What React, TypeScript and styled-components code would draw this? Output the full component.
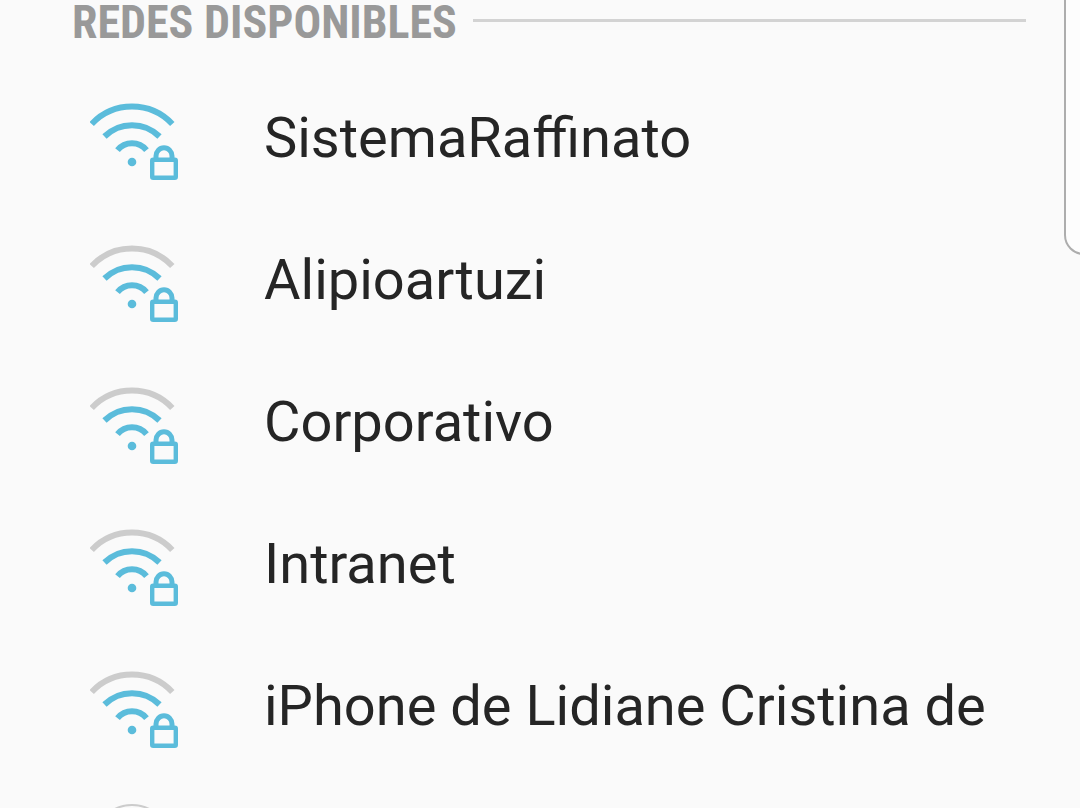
import React from 'react';
import styled, { createGlobalStyle } from 'styled-components';

const GlobalStyle = createGlobalStyle`
  html, body { margin: 0; height: 100%; overflow: hidden; background: #fafafa; }
  body { font-family: Roboto, "Liberation Sans", sans-serif; }
`;

const Page = styled.main`
  position: relative;
  height: 100vh;
  overflow: hidden;
`;

const SectionHeader = styled.header`
  display: flex;
  align-items: center;
  gap: 16px;
  height: 40px;
  padding: 0 54px 0 72px;
`;

const SectionTitle = styled.h1`
  margin: 4px 0 0;
  color: #999999;
  font-family: "Roboto Condensed", Roboto, "Liberation Sans", sans-serif;
  font-size: 46px;
  font-weight: 700;
  line-height: 40px;
  white-space: nowrap;
`;

const Divider = styled.span`
  flex: 1;
  height: 3px;
  background: #d3d3d3;
`;

const NetworkList = styled.ul`
  margin: 0;
  padding: 27px 0 0;
  list-style: none;
`;

const NetworkButton = styled.button`
  display: flex;
  align-items: center;
  gap: 84px;
  width: 100%;
  height: 142px;
  padding: 0 54px 0 90px;
  border: 0;
  background: transparent;
  color: #252525;
  font: inherit;
  font-size: 56px;
  line-height: 64px;
  text-align: left;
  white-space: nowrap;
`;

const TrailingRow = styled.li`
  display: flex;
  padding: 24px 54px 0 90px;
`;

const RowIcon = styled.svg`
  flex: none;
  width: 90px;
  height: 84px;
`;

const EdgePanel = styled.aside`
  position: absolute;
  top: -24px;
  right: -24px;
  box-sizing: border-box;
  width: 40px;
  height: 279px;
  border: 2px solid #adadad;
  border-radius: 20px;
  background: #fdfdfd;
`;

const blue = '#5bbcdb';
const grey = '#cccccc';

function Signal({ full }: { full: boolean }) {
  return (
    <RowIcon viewBox="0 0 90 84" fill="none" stroke={blue} strokeWidth="6" aria-hidden="true">
      <path d="M1.7 28A55.2 55.2 0 0 1 82.3 28" stroke={full ? blue : grey} />
      <path d="M14.5 40.5A39 39 0 0 1 69.5 40.5" />
      <path d="M27.5 54.2A18.7 18.7 0 0 1 56.5 54.2" />
      <circle cx="42" cy="66" r="4.3" fill={blue} stroke="none" />
      <rect x="62.2" y="63.7" width="23.6" height="18" rx="1" strokeWidth="4.4" />
      <path d="M66 63V60A8 8.2 0 0 1 82 60V63" strokeWidth="5" />
    </RowIcon>
  );
}

function RingIcon() {
  return (
    <RowIcon viewBox="0 0 90 84" fill="none" stroke={grey} strokeWidth="2" aria-hidden="true">
      <circle cx="42" cy="42" r="38" />
    </RowIcon>
  );
}

const networks = [
  { name: 'SistemaRaffinato', full: true },
  { name: 'Alipioartuzi', full: false },
  { name: 'Corporativo', full: false },
  { name: 'Intranet', full: false },
  { name: 'iPhone de Lidiane Cristina de', full: false },
];

export default function App() {
  return (
    <Page>
      <GlobalStyle />
      <SectionHeader>
        <SectionTitle>REDES DISPONIBLES</SectionTitle>
        <Divider />
      </SectionHeader>
      <NetworkList>
        {networks.map((network) => (
          <li key={network.name}>
            <NetworkButton type="button">
              <Signal full={network.full} />
              <span>{network.name}</span>
            </NetworkButton>
          </li>
        ))}
        <TrailingRow>
          <RingIcon />
        </TrailingRow>
      </NetworkList>
      <EdgePanel />
    </Page>
  );
}
